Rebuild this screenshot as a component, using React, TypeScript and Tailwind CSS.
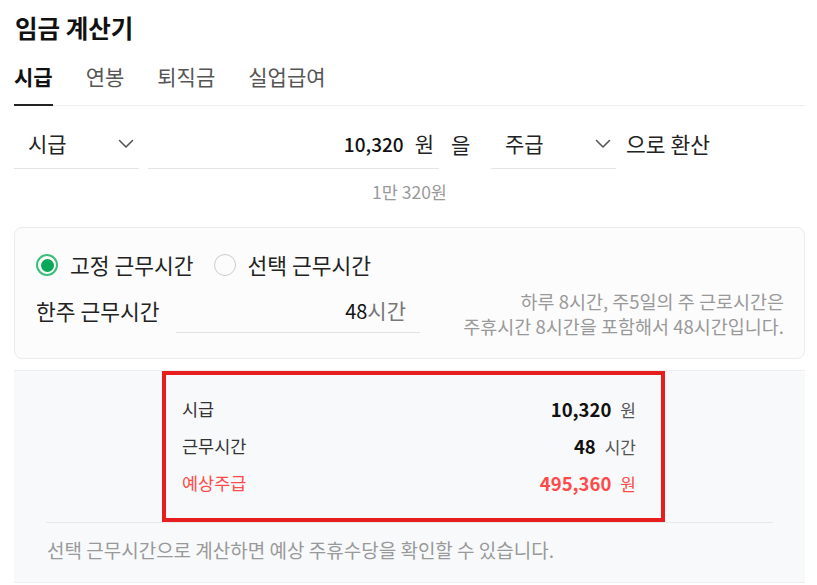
import React, { useState } from 'react';

const tabs = ['시급', '연봉', '퇴직금', '실업급여'];

const Chevron = () => (
  <svg width="16" height="10" viewBox="0 0 16 10" fill="none" className="shrink-0">
    <path d="M1.5 1.5L8 8L14.5 1.5" stroke="#555" strokeWidth="1.6" strokeLinecap="round" strokeLinejoin="round" />
  </svg>
);

const Select = ({ value }: { value: string }) => (
  <div className="flex h-[49px] w-[125px] shrink-0 items-center justify-between border-b border-[#e5e5e5] pl-[14px] pr-[5px]">
    <span className="text-[21px] text-[#222]">{value}</span>
    <Chevron />
  </div>
);

const Radio = ({ checked, label }: { checked: boolean; label: string }) => (
  <label className="flex items-center gap-[12px]">
    {checked ? (
      <span className="flex h-[22px] w-[22px] items-center justify-center rounded-full border-[2px] border-[#3bbf7a]">
        <span className="h-[13px] w-[13px] rounded-full bg-[#08a858]" />
      </span>
    ) : (
      <span className="h-[22px] w-[22px] rounded-full border-[1.5px] border-[#cccccc]" />
    )}
    <span className="text-[21.5px] leading-[30px] text-[#222]">{label}</span>
  </label>
);

const ResultRow = ({ label, value, unit, red }: { label: string; value: string; unit: string; red?: boolean }) => (
  <div className="flex h-[37px] items-center justify-between">
    <span className={red ? 'text-[17.5px] text-[#ff4a4a]' : 'text-[17.5px] text-[#333]'}>{label}</span>
    <span className="flex items-baseline gap-[9px]">
      <span className={red ? 'text-[18.5px] font-bold text-[#ff4a4a]' : 'text-[18.5px] font-bold text-[#111]'}>{value}</span>
      <span className={red ? 'text-[17px] text-[#ff4a4a]' : 'text-[17px] text-[#555]'}>{unit}</span>
    </span>
  </div>
);

export default function App() {
  const [active, setActive] = useState(0);

  return (
    <div
      className="min-h-[585px] bg-white pl-[14px] pr-[12px] pt-[12px] text-[#222]"
      style={{ fontFamily: '"Noto Sans CJK KR", "Noto Sans", sans-serif' }}
    >
      <h1 className="pl-px text-[24.5px] font-bold leading-[32px] text-[#111]">임금 계산기</h1>

      {/* tabs */}
      <div className="mt-[17px] flex gap-[33px] border-b border-[#eeeeee]">
        {tabs.map((t, i) => (
          <button
            key={t}
            onClick={() => setActive(i)}
            className={
              i === active
                ? '-mb-px border-b-2 border-[#222] pb-[13px] text-[21px] font-bold leading-[30px] text-[#111]'
                : '-mb-px border-b-2 border-transparent pb-[13px] text-[21px] leading-[30px] text-[#555]'
            }
          >
            {t}
          </button>
        ))}
      </div>

      {/* conversion row */}
      <div className="mt-[14px] flex items-center">
        <Select value="시급" />
        <div className="ml-[9px] flex h-[49px] w-[291px] items-center justify-end gap-[11px] border-b border-[#e5e5e5] pr-[5px]">
          <span className="text-[19px] font-medium text-[#111]">10,320</span>
          <span className="text-[21px] text-[#222]">원</span>
        </div>
        <span className="ml-[12px] w-[40px] text-[21px] text-[#222]">을</span>
        <Select value="주급" />
        <span className="ml-[10px] text-[21.5px] text-[#222]">으로 환산</span>
      </div>

      <p className="mt-[11px] text-center text-[17.5px] leading-[24px] text-[#999]">1만 320원</p>

      {/* work hours card */}
      <div className="mt-[23px] rounded-[8px] border border-[#ececec] bg-[#fcfcfc] pb-[19px] pl-[21px] pr-[20px] pt-[22px]">
        <div className="flex items-center gap-[20px]">
          <Radio checked label="고정 근무시간" />
          <Radio checked={false} label="선택 근무시간" />
        </div>
        <div className="mt-[9px] flex items-start">
          <span className="flex h-[44px] w-[140px] items-center text-[21.5px] text-[#222]">한주 근무시간</span>
          <div className="mt-px flex h-[43px] w-[244px] items-center justify-end border-b border-[#e2e2e2] pr-[14px]">
            <span className="text-[20px] text-[#111]">48</span>
            <span className="text-[21px] text-[#777]">시간</span>
          </div>
          <p className="ml-auto text-right text-[18.5px] leading-[25px] text-[#999]">
            하루 8시간, 주5일의 주 근로시간은
            <br />
            주휴시간 8시간을 포함해서 48시간입니다.
          </p>
        </div>
      </div>

      {/* result */}
      <div className="mt-[11px] border-y border-[#eeeeee] bg-[#f8f9fb]">
        <div className="ml-[148px] w-[503px] border-[4px] border-[#e81d1d] py-[16px] pl-[16px] pr-[25px]">
          <ResultRow label="시급" value="10,320" unit="원" />
          <ResultRow label="근무시간" value="48" unit="시간" />
          <ResultRow label="예상주급" value="495,360" unit="원" red />
        </div>
        <div className="mx-[32px] border-t border-[#e8e8e8]" />
        <p className="px-[33px] pb-[20px] pt-[15px] text-[19px] leading-[24px] text-[#999]">
          선택 근무시간으로 계산하면 예상 주휴수당을 확인할 수 있습니다.
        </p>
      </div>
    </div>
  );
}
